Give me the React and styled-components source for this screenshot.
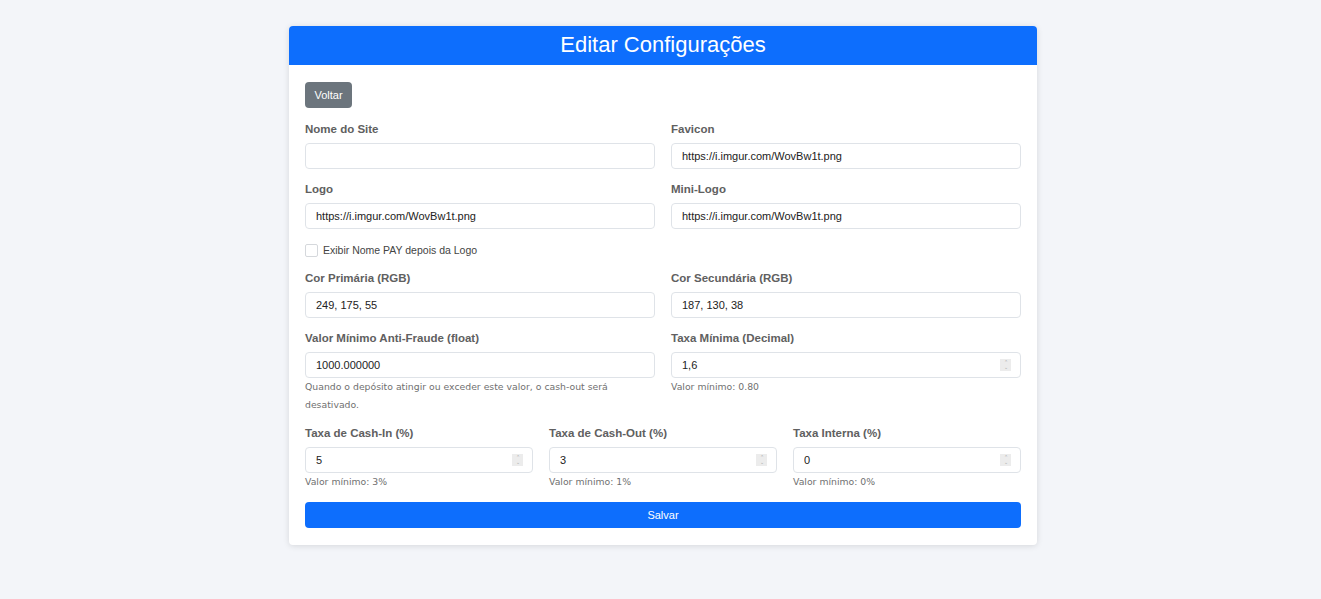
import React from 'react'
import styled, { createGlobalStyle } from 'styled-components'

const GlobalStyle = createGlobalStyle`
  body {
    margin: 0;
    background: #f3f5f9;
    font-family: "Liberation Sans", Arial, sans-serif;
  }
`

const Page = styled.div`
  padding: 26px 0 0 5px;
  display: flex;
  justify-content: center;
  min-height: 599px;
  box-sizing: border-box;
`

const Card = styled.div`
  width: 748px;
  height: 519px;
  background: #fff;
  border-radius: 4px;
  box-shadow: 0 1px 6px rgba(0, 0, 0, 0.12);
  overflow: hidden;
`

const Header = styled.div`
  height: 39px;
  background: #0d6efd;
  color: #fff;
  display: flex;
  align-items: center;
  justify-content: center;
  font-size: 22px;
  padding-bottom: 1px;
  box-sizing: border-box;
`

const Body = styled.div`
  padding: 17px 16px 16px;
`

const BackButton = styled.button`
  width: 47px;
  height: 26px;
  border: none;
  border-radius: 4px;
  background: #6c757d;
  color: #fff;
  font-family: "Liberation Sans", Arial, sans-serif;
  font-size: 11px;
  padding: 0;
  margin-bottom: 14px;
`

const Row = styled.div`
  display: grid;
  grid-template-columns: repeat(${p => p.cols || 2}, 1fr);
  column-gap: 16px;
  margin-bottom: 13px;
`

const Group = styled.div`
  display: flex;
  flex-direction: column;
`

const Label = styled.label`
  font-size: 11.5px;
  line-height: 14px;
  font-weight: 700;
  color: #606060;
  margin-bottom: 7px;
`

const InputWrap = styled.div`
  position: relative;
`

const Input = styled.input`
  width: 100%;
  height: 26px;
  box-sizing: border-box;
  border: 1px solid #dfe3e8;
  border-radius: 4px;
  padding: 0 10px;
  font-family: "Liberation Sans", Arial, sans-serif;
  font-size: 11px;
  color: #222;
  outline: none;
`

const Spinner = styled.span`
  position: absolute;
  right: 10px;
  top: 7px;
  width: 11px;
  height: 12px;
  background: #ececec;
  display: flex;
  flex-direction: column;
  align-items: center;
  justify-content: center;
  color: #a8a8a8;
  font-size: 5px;
  line-height: 5px;
`

const Hint = styled.div`
  font-family: "DejaVu Sans", Verdana, sans-serif;
  font-size: 9.3px;
  line-height: 18px;
  color: #707070;
  margin-bottom: -1px;
`

const CheckRow = styled.label`
  display: flex;
  align-items: center;
  gap: 5px;
  height: 16px;
  font-size: 10.5px;
  color: #444;
  margin-bottom: 13px;
`

const Box = styled.span`
  width: 11px;
  height: 11px;
  border: 1px solid #d5d8dc;
  border-radius: 2px;
  background: #fff;
`

const SaveButton = styled.button`
  width: 100%;
  height: 26px;
  margin-top: -1px;
  border: none;
  border-radius: 4px;
  background: #0d6efd;
  color: #fff;
  font-family: "Liberation Sans", Arial, sans-serif;
  font-size: 11px;
`

const Field = ({ label, value, number, hint }) => (
  <Group>
    <Label>{label}</Label>
    <InputWrap>
      <Input defaultValue={value} />
      {number && (
        <Spinner>
          <span>&#8963;</span>
          <span>&#8964;</span>
        </Spinner>
      )}
    </InputWrap>
    {hint && <Hint>{hint}</Hint>}
  </Group>
)

export default function App() {
  return (
    <>
      <GlobalStyle />
      <Page>
        <Card>
          <Header>Editar Configurações</Header>
          <Body>
            <BackButton>Voltar</BackButton>
            <Row>
              <Field label="Nome do Site" value="" />
              <Field label="Favicon" value="https://i.imgur.com/WovBw1t.png" />
            </Row>
            <Row>
              <Field label="Logo" value="https://i.imgur.com/WovBw1t.png" />
              <Field label="Mini-Logo" value="https://i.imgur.com/WovBw1t.png" />
            </Row>
            <CheckRow>
              <Box />
              Exibir Nome PAY depois da Logo
            </CheckRow>
            <Row>
              <Field label="Cor Primária (RGB)" value="249, 175, 55" />
              <Field label="Cor Secundária (RGB)" value="187, 130, 38" />
            </Row>
            <Row>
              <Field
                label="Valor Mínimo Anti-Fraude (float)"
                value="1000.000000"
                hint={<>Quando o depósito atingir ou exceder este valor, o cash-out será<br />desativado.</>}
              />
              <Field label="Taxa Mínima (Decimal)" value="1,6" number hint="Valor mínimo: 0.80" />
            </Row>
            <Row cols={3}>
              <Field label="Taxa de Cash-In (%)" value="5" number hint="Valor mínimo: 3%" />
              <Field label="Taxa de Cash-Out (%)" value="3" number hint="Valor mínimo: 1%" />
              <Field label="Taxa Interna (%)" value="0" number hint="Valor mínimo: 0%" />
            </Row>
            <SaveButton>Salvar</SaveButton>
          </Body>
        </Card>
      </Page>
    </>
  )
}
